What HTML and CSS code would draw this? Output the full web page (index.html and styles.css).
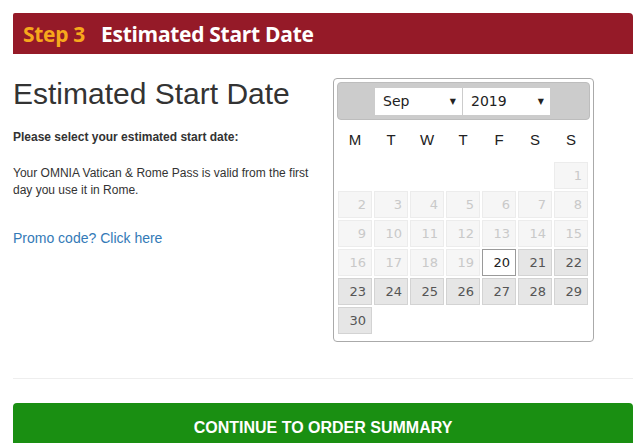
FILE: index.html
```html
<!DOCTYPE html>
<html>
<head>
<meta charset="utf-8">
<link rel="stylesheet" href="styles.css">
</head>
<body>
<div class="page">
  <div class="step-bar"><span class="step-num">Step 3</span><span class="step-title">Estimated Start Date</span></div>
  <div class="content">
    <div class="left">
      <h1 class="title">Estimated Start Date</h1>
      <p class="lead">Please select your estimated start date:</p>
      <p class="info">Your OMNIA Vatican &amp; Rome Pass is valid from the first day you use it in Rome.</p>
      <a class="promo" href="#">Promo code? Click here</a>
    </div>
    <div class="right">
      <div class="cal">
        <div class="cal-head">
          <div class="sel sel-month"><span>Sep</span><span class="arr">▼</span></div>
          <div class="sel sel-year"><span>2019</span><span class="arr">▼</span></div>
        </div>
        <div class="dow">
          <span>M</span><span>T</span><span>W</span><span>T</span><span>F</span><span>S</span><span>S</span>
        </div>
        <div class="grid">
          <span class="empty"></span><span class="empty"></span><span class="empty"></span><span class="empty"></span><span class="empty"></span><span class="empty"></span>
          <span class="d off">1</span>
          <span class="d off">2</span><span class="d off">3</span><span class="d off">4</span><span class="d off">5</span><span class="d off">6</span><span class="d off">7</span><span class="d off">8</span>
          <span class="d off">9</span><span class="d off">10</span><span class="d off">11</span><span class="d off">12</span><span class="d off">13</span><span class="d off">14</span><span class="d off">15</span>
          <span class="d off">16</span><span class="d off">17</span><span class="d off">18</span><span class="d off">19</span><span class="d today">20</span><span class="d on">21</span><span class="d on">22</span>
          <span class="d on">23</span><span class="d on">24</span><span class="d on">25</span><span class="d on">26</span><span class="d on">27</span><span class="d on">28</span><span class="d on">29</span>
          <span class="d on">30</span>
        </div>
      </div>
    </div>
  </div>
  <hr class="divider">
  <div class="btn">CONTINUE TO ORDER SUMMARY</div>
</div>
</body>
</html>
```

FILE: styles.css
```css
html, body {
  margin: 0;
  padding: 0;
  background: #fff;
}
body {
  font-family: "Liberation Sans", Arial, sans-serif;
  color: #333;
}
.page {
  padding: 13px 11px 0 13px;
}
.step-bar {
  height: 41px;
  background: #951a28;
  border-radius: 2px 4px 0 0;
  display: flex;
  align-items: center;
  padding-left: 10px;
  font-family: "Open Sans", sans-serif;
  font-weight: 700;
  font-size: 21px;
  letter-spacing: -0.3px;
}
.step-num {
  color: #f7a81c;
  margin-right: 16px;
}
.step-title {
  color: #fff;
}
.content {
  display: flex;
  gap: 20px;
}
.left {
  width: 300px;
}
.title {
  font-size: 30px;
  font-weight: 400;
  line-height: 33px;
  margin: 23px 0 0 0;
  color: #333;
}
.lead {
  font-size: 12px;
  font-weight: 700;
  margin: 19px 0 0 0;
  line-height: 17px;
}
.info {
  font-size: 12px;
  margin: 19px 0 0 0;
  line-height: 17px;
}
.promo {
  display: block;
  font-size: 14px;
  color: #337ab7;
  text-decoration: none;
  margin-top: 29px;
  line-height: 20px;
}
.right {
  padding-top: 24px;
}
.cal {
  border: 1px solid #aaa;
  border-radius: 4px;
  padding: 3px 3px 7px 3px;
  box-sizing: content-box;
  width: 253px;
}
.cal-head {
  height: 36px;
  background: #cccccc;
  border: 1px solid #bdbdbd;
  border-radius: 4px;
  display: flex;
  justify-content: center;
  align-items: center;
  gap: 1px;
  padding-right: 2px;
}
.sel {
  height: 27px;
  width: 87px;
  background: #fff;
  box-sizing: border-box;
  display: flex;
  align-items: center;
  justify-content: space-between;
  padding: 0 6px 0 8px;
  font-family: "DejaVu Sans", Verdana, sans-serif;
  font-size: 14px;
  color: #222;
}
.arr {
  font-size: 8px;
  color: #222;
}
.dow {
  display: grid;
  grid-template-columns: repeat(7, 34px);
  column-gap: 2px;
  margin: 10px 0 12px 1px;
  height: 20px;
  line-height: 20px;
  font-size: 15px;
  color: #222;
  text-align: center;
}
.grid {
  display: grid;
  grid-template-columns: repeat(7, 34px);
  grid-auto-rows: 27px;
  gap: 2px;
  margin-left: 1px;
}
.d {
  box-sizing: border-box;
  border: 1px solid #d3d3d3;
  text-align: right;
  padding-right: 5px;
  font-family: "DejaVu Sans", Verdana, sans-serif;
  font-size: 13px;
  line-height: 25px;
}
.off {
  background: #f6f6f6;
  border-color: #ececec;
  color: #c9c9c9;
}
.on {
  background: #e6e6e6;
  color: #555;
}
.today {
  background: #fff;
  border-color: #9a9a9a;
  color: #212121;
}
.divider {
  border: 0;
  border-top: 1px solid #eee;
  margin: 36px 0 0 0;
}
.btn {
  margin-top: 24px;
  height: 48px;
  background: #1a8f12;
  border-radius: 4px;
  color: #fff;
  font-weight: 700;
  font-size: 16px;
  letter-spacing: 0;
  display: flex;
  justify-content: center;
  padding-top: 16px;
  box-sizing: border-box;
}
```
